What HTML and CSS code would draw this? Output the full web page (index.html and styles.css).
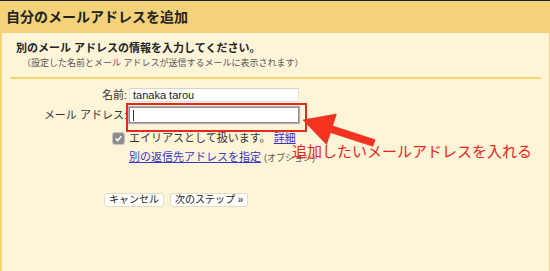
FILE: index.html
```html
<!DOCTYPE html>
<html lang="ja">
<head>
  <meta charset="UTF-8">
  <title>自分のメールアドレスを追加</title>
  <link rel="stylesheet" href="styles.css">
</head>
<body>
  <div class="page">
    <div class="header">自分のメールアドレスを追加</div>

    <div class="panel">
      <div class="intro">
        <div class="lead">別のメール アドレスの情報を入力してください。</div>
        <div class="note">（設定した名前とメール アドレスが送信するメールに表示されます）</div>
      </div>
      <div class="rule"></div>

      <div class="form">
        <div class="row">
          <div class="label">名前:</div>
          <div class="field">tanaka tarou</div>
        </div>
        <div class="row row-email">
          <div class="label">メール アドレス:</div>
          <div class="field field-focus"><span class="caret"></span></div>
        </div>
        <div class="row row-check">
          <div class="label">
            <span class="checkbox">
              <svg width="11" height="11" viewBox="0 0 11 11"><path d="M2.6 5.6 L4.6 7.6 L8.4 3.2" fill="none" stroke="#fff" stroke-width="1.5"/></svg>
            </span>
          </div>
          <div class="value">エイリアスとして扱います。 <a href="#">詳細</a></div>
        </div>
        <div class="row row-link">
          <div class="label"></div>
          <div class="value"><a href="#">別の返信先アドレスを指定</a> <span class="option">(オプション)</span></div>
        </div>
        <div class="buttons">
          <button class="btn">キャンセル</button>
          <button class="btn">次のステップ »</button>
        </div>
      </div>
    </div>

    <!-- annotation overlay -->
    <div class="mark"></div>
    <svg class="arrow" width="82" height="42" viewBox="298 108 82 42">
      <polygon points="303,120 336.4,114 332.6,125.9 375.1,139.7 372.9,146.3 330.4,132.5 326.6,144.4" fill="#f4321e" stroke="#d42414" stroke-width="0.6"/>
    </svg>
    <div class="callout">追加したいメールアドレスを入れる</div>
  </div>
</body>
</html>
```

FILE: styles.css
```css
body {
  margin: 0;
  font-family: "Liberation Sans", "Noto Sans CJK JP", sans-serif;
  color: #222;
  background: #fef5d8;
}
.page {
  position: relative;
  width: 550px;
  height: 271px;
  border-top: 1px solid #1d1b33;
  box-sizing: border-box;
  overflow: hidden;
}
.header {
  height: 32px;
  line-height: 32px;
  padding-left: 6px;
  font-size: 14px;
  font-weight: bold;
  background: #f3d27a;
}
.panel {
  height: 238px;
  background: #fef5d8;
  border-left: 2px solid #f3d27a;
  border-right: 1px solid #f3d27a;
}
.intro {
  padding: 7px 0 0 14px;
}
.lead {
  font-size: 11px;
  font-weight: bold;
  line-height: 16px;
}
.note {
  font-size: 9px;
  line-height: 14px;
  padding-left: 6px;
  color: #555;
}
.rule {
  margin: 7px 8px 0 8px;
  border-top: 2px solid #f7d46c;
}
.form {
  padding-top: 9px;
  font-size: 11px;
}
.row {
  display: flex;
  align-items: center;
}
.label {
  width: 125px;
  text-align: right;
  line-height: 14px;
  color: #333;
}
.field {
  margin-left: 2px;
  width: 170px;
  height: 14px;
  box-sizing: border-box;
  padding-left: 3px;
  line-height: 13px;
  background: #fff;
  border: 1px solid #e6e2d6;
  border-top-color: #d8d4c8;
}
.field-focus {
  height: 16px;
  border: 1px solid #8f8f8f;
  box-shadow: 0 0 1px 1px #b0b0b0;
  display: flex;
  align-items: center;
}
.caret {
  width: 1px;
  height: 11px;
  background: #333;
}
.row-email {
  margin-top: 5px;
}
.row-check {
  margin-top: 8px;
}
.row-check .label {
  display: flex;
  justify-content: flex-end;
  padding-right: 3px;
  box-sizing: border-box;
}
.checkbox {
  display: block;
  width: 11px;
  height: 11px;
  border-radius: 2px;
  background: #8c8c8c;
  box-shadow: 0 0 0 1px #c4c4c4;
}
.checkbox svg {
  display: block;
}
.value {
  margin-left: 2px;
  line-height: 14px;
  color: #333;
}
.row-link {
  margin-top: 5px;
}
a {
  color: #3535c8;
}
.option {
  font-size: 9px;
  color: #555;
}
.buttons {
  display: flex;
  gap: 6px;
  margin: 28px 0 0 102px;
}
.btn {
  height: 14px;
  padding: 0 4px;
  font-family: inherit;
  font-size: 10px;
  line-height: 12px;
  color: #222;
  background: #fdfdfb;
  border: 1px solid #e2dcc8;
  border-radius: 3px;
}
.mark {
  position: absolute;
  left: 126px;
  top: 102px;
  width: 181px;
  height: 29px;
  box-sizing: border-box;
  border: 2px solid #e6281e;
}
.arrow {
  position: absolute;
  left: 298px;
  top: 107px;
}
.callout {
  position: absolute;
  left: 292px;
  top: 141px;
  font-family: "Noto Sans CJK JP", sans-serif;
  font-size: 15px;
  line-height: 18px;
  color: #e8261c;
}
```
